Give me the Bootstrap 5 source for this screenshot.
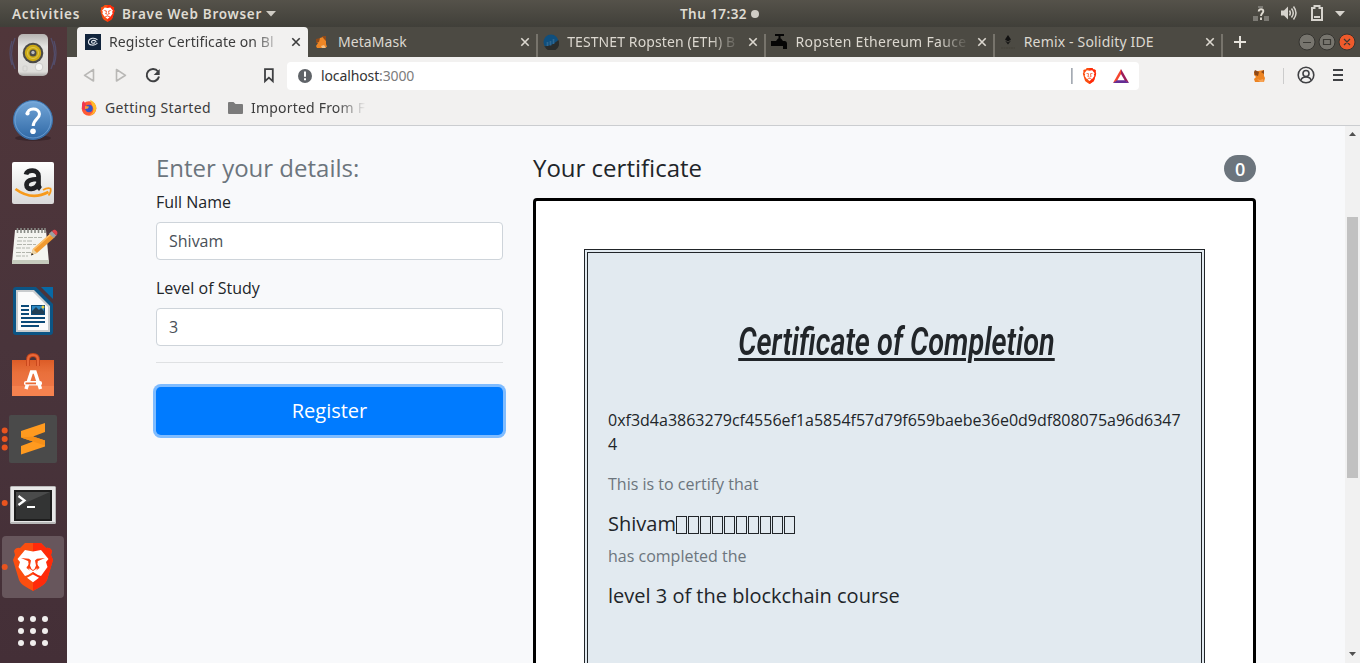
<!DOCTYPE html>
<html lang="en">
<head>
<meta charset="utf-8">
<title>Register Certificate on Blockchain</title>
<link rel="stylesheet" href="https://cdn.jsdelivr.net/npm/bootstrap@5.3.0/dist/css/bootstrap.min.css">
<style>
  html, body { height: 663px; overflow: hidden; }
  body { font-family: "Open Sans", "Noto Sans", sans-serif; background: #f8f9fb; color: #212529; line-height: 1.5; }
  svg { display: block; flex: none; }
  .ui-font { font-family: "Noto Sans", "Open Sans", sans-serif; font-size: 14px; line-height: 20px; white-space: nowrap; }
  .system-bar { height: 27px; background: linear-gradient(#55524a, #403f39); color: #dfdbd2; font-weight: 600; font-size: 13.5px; display: grid; grid-template-columns: 1fr auto 1fr; }
  .activities { margin-left: 12px; width: 88px; letter-spacing: .8px; }
  .app-name { margin-left: 7px; letter-spacing: .72px; }
  .clock { margin-left: 79px; letter-spacing: .45px; }
  .dock { width: 67px; background: linear-gradient(#50363a, #49343b 50%, #442f37); }
  .dock svg:first-child { margin-top: -4px; }
  .tab-strip { height: 30px; background: #4c4a43; padding-left: 10px; }
  .tab-item { width: 228.4px; padding: 0 4px 0 7px; color: #dcd8d0; position: relative; }
  .tab-item + .tab-item::before { content: ""; position: absolute; left: 0; top: 7px; bottom: 0; width: 2px; background: #77746c; }
  .tab-item.current { width: 231px; padding: 0 5px 0 8px; background: #f2f1f0; color: #3c3c3c; border-radius: 4px 4px 0 0; }
  .tab-item.current + .tab-item { padding-left: 6px; }
  .tab-item.current + .tab-item::before { display: none; }
  .tab-title { flex: 1; margin-left: 8px; margin-right: 6px; letter-spacing: .1px; }
  .fade-end { -webkit-mask-image: linear-gradient(90deg, #000 calc(100% - 30px), transparent); mask-image: linear-gradient(90deg, #000 calc(100% - 30px), transparent); }
  .toolbar { height: 38px; background: #f2f1f0; }
  .address { width: 852px; height: 28px; background: #fff; border-radius: 4px; color: #333; letter-spacing: -.12px; }
  .port { color: #7c7c7c; }
  .bookmarks { height: 31px; background: #f2f1f0; border-bottom: 1px solid #cbcdd0; color: #3c3c3c; padding: 0 0 5px 14px; letter-spacing: .35px; }
  .page { height: 537px; overflow: hidden; }
  .page-body { padding: 27.2px 0 0 89px; gap: 30px; }
  .form-side { width: 347px; }
  .cert-side { width: 723px; }
  h4 { font-size: 24px; font-weight: 400; line-height: 28.8px; padding-top: 1px; height: 28.8px; }
  .text-soft { color: #6c757d; }
  .form-control { height: 38px; border-color: #ced4da; border-radius: 4px; color: #495057; }
  .rule { height: 1px; background: #dfe1e3; margin-bottom: 24px; }
  .register { height: 48px; background: #007bff; color: #fff; font-size: 20px; border: 0; border-radius: 4.8px; box-shadow: 0 0 0 3px #7fbcff; }
  .count { font-size: 18px; line-height: 18px; font-weight: 600; padding: 4.5px 10.8px; background: #6c757d; border-radius: 160px; margin-top: 1px; }
  .frame { border: 3px solid #000; border-radius: 4px; background: #fff; padding: 48px; height: 600px; }
  .sheet { border: 4px double #212529; background: #e2eaf0; height: 600px; padding: 20px; }
  .cert-title { height: 135px; padding: 41px 0 0 3px; text-align: center; }
  .cert-title span { display: inline-block; font: italic 600 39.500px/56px Roboto, sans-serif; transform: scaleX(.731); text-decoration: underline; text-decoration-thickness: 3px; text-underline-offset: 3px; white-space: nowrap; margin: 0 -60px; }
  .hash { word-break: break-all; }
  h5 { font-size: 20px; line-height: 24px; font-weight: 400; }
  .tofu { width: 11px; height: 18px; border: 1px solid #212529; margin-right: 1px; position: relative; top: 1px; }
  .scroll { width: 15px; background: #f1f1f1; }
  .thumb { width: 11px; height: 261px; background: #c1c1c1; margin-top: 76px; margin-bottom: 168px; }
</style>
</head>
<body class="d-flex flex-column">
<svg width="0" height="0" class="position-absolute">
  <symbol id="lion" viewBox="0 0 40 48">
    <path d="M12 0h16l5 5q4-1 6 3l-1 4 2 5-6 20c-2 5-9 8-14 11C15 45 8 42 6 37L0 17l2-5-1-4q2-4 6-3z" fill="#fb4e10"/>
    <path d="M20 0h8l5 5q4-1 6 3l-1 4 2 5-6 20c-2 5-9 8-14 11z" fill="#ff2a0a"/>
    <path d="M12 7l8 1.500L28 7l7.500 9-2.500 3 1.500 5-6.500 9-3-1-5-3-5 3-3 1-6.500-9L7 19l-2.500-3zM20 31.500l6 3.300-6 4.500-6-4.500z" fill="#fff"/>
    <path d="M8 15l8 .8 2 1.700-1 5 1.500 3.500L20 27l1.500-1 1.500-3.500-1-5 2-1.700 8-.8-7 3-.5 1 2 6-6.500 4.700-6.500-4.700 2-6-.5-1z" fill="#fb3e0f"/>
    <path d="M9.500 18.500q4 3.500 6.500 1.500l-1.500 3.500zM30.500 18.500q-4 3.500-6.500 1.500l1.500 3.500zM15.500 25l4.500 3 4.500-3-2 4h-5z" fill="#fff"/>
  </symbol>
  <symbol id="close" viewBox="0 0 10 10"><path d="M1.300 1.300l7.400 7.400M8.700 1.300L1.300 8.700" stroke="currentColor" stroke-width="1.600"/></symbol>
</svg>

<header class="system-bar ui-font align-items-center">
  <div class="d-flex align-items-center">
    <span class="activities">Activities</span>
    <svg width="15" height="17"><use href="#lion"/></svg>
    <span class="app-name">Brave Web Browser</span>
    <svg width="10" height="6" class="ms-1"><path d="M0 0h10L5 5.500z" fill="#cfccc5"/></svg>
  </div>
  <div class="clock d-flex align-items-center"><span>Thu 17:32</span><svg width="8" height="8" class="ms-1"><circle cx="4" cy="4" r="4" fill="#cfccc5"/></svg></div>
  <svg class="ms-auto" width="110" height="27" viewBox="1250 0 110 27">
    <path d="M1253 16h5v5h-5zM1264 16h5v5h-5zM1258 6h5v2h-5z" fill="#7c7a74"/>
    <path d="M1258.700 11.500c.3-3 4.800-3 4.600-.2 0 2-2.300 2-2.300 4.700M1261 17.500v2.500" fill="none" stroke="#dfdbd2" stroke-width="1.900"/>
    <path d="M1281 10.500h3l4-4v13l-4-4h-3z" fill="#d6d3cd"/>
    <path d="M1289.500 10.500q1.700 2.500 0 5M1291.500 8.500q3.500 4.500 0 9M1293.500 6.500q5 6.500 0 13" fill="none" stroke="#d6d3cd" stroke-width="1.500"/>
    <path d="M1314.500 6h5v2h2.500v12h-10V8h2.500z" fill="none" stroke="#d6d3cd" stroke-width="2"/><path d="M1314 16h6v2h-6z" fill="#d6d3cd"/>
    <path d="M1335 11h10l-5 5.500z" fill="#d6d3cd"/>
  </svg>
</header>

<div class="d-flex flex-grow-1">
  <aside class="dock flex-shrink-0">
    <svg width="67" height="64" viewBox="0 23 67 64">
      <defs><linearGradient id="spk" x2="0" y2="1"><stop stop-color="#b5b3b1"/><stop offset=".3" stop-color="#e4e3e1"/><stop offset=".9" stop-color="#deddda"/><stop offset="1" stop-color="#aaa8a6"/></linearGradient></defs>
      <path d="M15 38q-7 16 0 31M12 41q-4 12 0 24M51 38q7 16 0 31M54 41q4 12 0 24" fill="none" stroke="#525276" stroke-width="1.300" opacity=".8"/>
      <rect x="18" y="34" width="30" height="42" rx="5" fill="url(#spk)"/>
      <circle cx="33" cy="53" r="10.300" fill="#4b4a49"/><circle cx="33" cy="53" r="8.200" fill="#cdaa15"/><circle cx="33" cy="53" r="5.500" fill="none" stroke="#e0c84d"/><circle cx="33" cy="53" r="3.500" fill="#4a4a48"/><circle cx="33" cy="52.500" r="1.700" fill="#bbb"/>
      <circle cx="39" cy="67" r="3.800" fill="#f5f5f4" stroke="#c5c4c2" stroke-width=".8"/><rect x="23" y="66" width="4" height="5" rx="1" fill="none" stroke="#cfcecc"/>
    </svg>
    <svg width="67" height="64" viewBox="0 87 67 64">
      <defs><linearGradient id="hlp" x2="0" y2="1"><stop stop-color="#73a6d8"/><stop offset="1" stop-color="#2f68a5"/></linearGradient></defs>
      <ellipse cx="33" cy="138" rx="18" ry="3" fill="#3b272c"/><circle cx="33" cy="120" r="19.500" fill="url(#hlp)" stroke="#3a72ac"/><circle cx="33" cy="120" r="18" fill="none" stroke="#7cacdc" stroke-width=".7"/>
      <path d="M27.500 114.500c-1-7 12-7.500 12-.5 0 5-6 5-6.300 12" fill="none" stroke="#fff" stroke-width="3"/><circle cx="27.500" cy="113.500" r="2.100" fill="#fff"/><circle cx="33" cy="131.300" r="2.800" fill="#fff"/>
    </svg>
    <svg width="67" height="64" viewBox="0 151 67 64">
      <defs><linearGradient id="amz" x2="0" y2="1"><stop stop-color="#fff"/><stop offset="1" stop-color="#d9d9d9"/></linearGradient></defs>
      <rect x="12" y="162" width="42" height="42" rx="2" fill="url(#amz)"/>
      <path d="M26 174.500c1-5.500 12.500-5.500 12.500 1.500v8.500q0 3 2 4.500M38 179c-7 0-11.500 1.500-11.500 6 0 5.500 9 5 11.500-1" fill="none" stroke="#202124" stroke-width="4.700"/>
      <path d="M15.500 189q16 12 33 3" fill="none" stroke="#f79a1b" stroke-width="2.800"/><path d="M43 190q4-2.500 7.500-1.500 1 3-2 7" fill="none" stroke="#f79a1b" stroke-width="1.800"/>
    </svg>
    <svg width="67" height="64" viewBox="0 215 67 64">
      <path d="M15 230h31l3 33H12z" fill="#f4f4f0"/><path d="M12 260h37v4H12z" fill="#c5cbbd"/>
      <path d="M17.500 228v5M21 228v5M24.500 228v5M28 228v5M31.500 228v5M35 228v5M38.500 228v5M42 228v5M45 228v5" stroke="#888a85" stroke-width="1.600"/>
      <path d="M18 237.500h24M17 241h16M17 244.500h20M16 248h14M16 252.500h18M16 256h12" stroke="#b2b5ad" stroke-width="1.200" stroke-dasharray="5 1 3 1"/>
      <path d="M31 255l2-6 18-16 4 4-18 16z" fill="#f19a31"/><path d="M33 250l18-16" stroke="#fdc06a" stroke-width="1.500"/><path d="M31 255l2-6 4 4z" fill="#ecd4a6"/><path d="M31 255.500l.8-2.600 1.800 1.700z" fill="#222"/>
      <path d="M49 233.500l3-2.500 4.500 4.500-3 2.500z" fill="#9ca0a2"/><path d="M52 231l1.500-1c2-1 5 2 3.500 4.500l-1 1z" fill="#e3434b"/>
    </svg>
    <svg width="67" height="64" viewBox="0 279 67 64">
      <path d="M16 287h20l17 17v28q0 3-3 3H16q-3 0-3-3v-42q0-3 3-3z" fill="#0c5585"/><path d="M41 287h12v12z" fill="#0769a5"/>
      <path d="M16 290h18l16 16v26H16z" fill="#c9ccce"/><path d="M18 292h15l15 15v23H18z" fill="#fbfbfb"/>
      <path d="M21 306h8M21 310h8M21 314h8M21 318h24M21 322h24M21 326h18" stroke="#0b4a78" stroke-width="2"/>
      <path d="M31 305h14v10H31z" fill="#0b4a78"/><path d="M32 306h12v8H32z" fill="#2d8ac4"/><path d="M32 314v-3l4-4 3 3 2-2 3 3v3z" fill="#213f55"/><circle cx="43" cy="307" r="1.500" fill="#ecd13d"/>
    </svg>
    <svg width="67" height="64" viewBox="0 343 67 64">
      <defs><linearGradient id="bag" x2="0" y2="1"><stop stop-color="#dc5c27"/><stop offset=".35" stop-color="#e9703b"/><stop offset="1" stop-color="#f0784b"/></linearGradient></defs>
      <path d="M12 360h42v36H12z" fill="url(#bag)"/><path d="M12 386h42v10H12z" fill="#f5824f"/>
      <path d="M28 366v-6q0-5 5-5t5 5v6" fill="none" stroke="#c8461b" stroke-width="3.800"/><path d="M28 366v-6q0-5 5-5t5 5v6" fill="none" stroke="#e9693a" stroke-width="2"/>
      <path d="M26 389l5.500-17h3.500l5.500 17" fill="none" stroke="#fff" stroke-width="3.500"/><rect x="24" y="381" width="18" height="4.500" rx="2" fill="#fff"/><rect x="25.500" y="382.500" width="10.500" height="1.800" fill="#ea6b35"/>
    </svg>
    <svg width="67" height="64" viewBox="0 407 67 64">
      <g fill="#e9541f"><circle cx="4.700" cy="430.500" r="3"/><circle cx="4.700" cy="439" r="3"/><circle cx="4.700" cy="447.500" r="3"/></g>
      <rect x="9" y="415" width="48" height="48" rx="2" fill="#4a4a4a"/>
      <path d="M21 431l24-8v9l-12 4.500 12 4v6l-24 8v-8.500l12-4.500-12-4z" fill="#ff9a1f"/><path d="M33 436.500l12 4v5l-24-8z" fill="#f58f18"/>
    </svg>
    <svg width="67" height="64" viewBox="0 471 67 64">
      <circle cx="4.700" cy="503" r="3" fill="#e9541f"/>
      <rect x="10" y="486" width="46" height="38" rx="1.500" fill="#b9b9b9"/><rect x="11" y="487" width="44" height="35" fill="#e8e8e8"/><rect x="14" y="490" width="38" height="31" fill="#1d1d1d"/><rect x="16" y="492" width="34" height="27" fill="#333434"/><path d="M16 492h34l-34 15z" fill="#4a4b4b"/>
      <path d="M18.500 496l6 4.500-6 4.500" fill="none" stroke="#fff" stroke-width="2.200"/><path d="M27 507h8" stroke="#fff" stroke-width="2"/>
    </svg>
    <svg width="67" height="64" viewBox="0 535 67 64">
      <rect x="2" y="536" width="62" height="62" rx="4" fill="#67565c"/><circle cx="4.700" cy="567" r="3" fill="#e9541f"/>
      <use href="#lion" x="13" y="543" width="40" height="48"/>
    </svg>
    <svg width="67" height="64" viewBox="0 599 67 64">
      <g fill="#f0eeed"><circle cx="21" cy="619" r="3"/><circle cx="33" cy="619" r="3"/><circle cx="45" cy="619" r="3"/><circle cx="21" cy="631" r="3"/><circle cx="33" cy="631" r="3"/><circle cx="45" cy="631" r="3"/><circle cx="21" cy="643" r="3"/><circle cx="33" cy="643" r="3"/><circle cx="45" cy="643" r="3"/></g>
    </svg>
  </aside>

  <main class="flex-grow-1 overflow-hidden">
    <nav class="tab-strip d-flex ui-font">
      <div class="tab-item current d-flex align-items-center">
        <svg width="16" height="16"><path d="M0 0h16v16H0z" fill="#11243c"/><path d="M12.500 6C10 3 4 4 3.500 7.500c-.5 4 6 5 9 1.500M11 8.500C11.500 6 6.500 5.500 6.500 8c0 1.500 2.500 1.500 3.500.5" fill="none" stroke="#dfe5ec" stroke-width="1.100"/></svg>
        <span class="tab-title fade-end">Register Certificate on Bl</span>
        <svg width="14" height="10"><use href="#close"/></svg>
      </div>
      <div class="tab-item d-flex align-items-center">
        <svg width="16" height="16"><path d="M6 4l3-1 2-1 1 5v3l1 3-5 1H3l-1-2 2-3-2-1z" fill="#ee8625"/><path d="M8 2l4 0v5l-2-2zM2 5l4-1-1 4-3 1z" fill="#8e4a1a"/><path d="M7 12l3-1 2 3H8z" fill="#f5c083"/></svg>
        <span class="tab-title">MetaMask</span>
        <svg width="14" height="10"><use href="#close"/></svg>
      </div>
      <div class="tab-item d-flex align-items-center">
        <svg width="16" height="16"><circle cx="8" cy="8" r="7.500" fill="#0f4f7e"/><path d="M1 12.500q9-1 14.300-6.500A7.500 7.500 0 0 1 2 13z" fill="#2a2c2b"/><path d="M4.500 8v4M7.500 7v4.500M10.500 5v5" stroke="#2f668f" stroke-width="1.700"/></svg>
        <span class="tab-title fade-end">TESTNET Ropsten (ETH) B</span>
        <svg width="14" height="10"><use href="#close"/></svg>
      </div>
      <div class="tab-item d-flex align-items-center">
        <svg width="16" height="16"><path d="M4 0h9v2H4zM7.500 2h2v3h-2zM0 7h5l2-2.500h3L12 7h1.500q2.500 0 2.500 3v5h-4v-3H0z" fill="#050505"/></svg>
        <span class="tab-title fade-end" style="letter-spacing:.3px">Ropsten Ethereum Fauce</span>
        <svg width="14" height="10"><use href="#close"/></svg>
      </div>
      <div class="tab-item d-flex align-items-center">
        <svg width="16" height="16"><path d="M8 1l3 4.500L8 7.500l-3-2zM5 6.500l3 2 3-2-3 4z" fill="#111"/><path d="M1 14h14" stroke="#434139" stroke-dasharray="2 .5"/></svg>
        <span class="tab-title" style="letter-spacing:.17px">Remix - Solidity IDE</span>
        <svg width="14" height="10"><use href="#close"/></svg>
      </div>
      <svg width="139" height="30" viewBox="1221 27 139 30">
        <path d="M1221 34h2v23h-2z" fill="#77746c"/><path d="M1240 36v12M1234 42h12" stroke="#e6e3dc" stroke-width="2"/>
        <g fill="#77756e" stroke="#353430"><circle cx="1307" cy="42" r="8"/><circle cx="1327" cy="42" r="8"/><circle cx="1347" cy="42" r="8" fill="#ee5a2b"/></g>
        <path d="M1303 42.500h8M1323.500 39.500h7v5h-7zM1344 39l6 6M1350 39l-6 6" fill="none" stroke="#3a3934" stroke-width="1.200"/>
      </svg>
    </nav>

    <div class="toolbar ui-font d-flex align-items-center">
      <svg width="220" height="38" viewBox="67 57 220 38">
        <path d="M93.500 69.500v11.500l-9-5.700zM116.500 69.500v11.500l9-5.700z" fill="none" stroke="#b9b8b6" stroke-width="1.600" stroke-linejoin="round"/>
        <path d="M158 71.500a6.200 6.200 0 1 0 1 5" fill="none" stroke="#3f4042" stroke-width="2"/><path d="M159.700 69v6h-6z" fill="#3f4042"/>
        <path d="M265 69.200h7.800v12l-3.900-3.500-3.900 3.500z" fill="none" stroke="#3f4042" stroke-width="1.800"/>
      </svg>
      <div class="address d-flex align-items-center">
        <svg width="34" height="28" viewBox="287 62 34 28"><circle cx="305" cy="76" r="7" fill="#5f6368"/><path d="M305 71.500v5.300M305 78.300v2" stroke="#fff" stroke-width="2"/></svg>
        <span class="flex-grow-1">localhost<span class="port">:3000</span></span>
        <svg width="69" height="28" viewBox="1070 62 69 28">
          <path d="M1071 68h1.700v16h-1.700z" fill="#a5abb3"/><use href="#lion" x="1081" y="68" width="17" height="16"/>
          <path d="M1121 69l-8 14 4-2 4-7z" fill="#f5452e"/><path d="M1121 69l8 14-4-2-4-7z" fill="#9c1b5a"/><path d="M1113 83h16l-4-2.700h-8z" fill="#642d94"/>
        </svg>
      </div>
      <svg width="221" height="38" viewBox="1139 57 221 38">
        <path d="M1254 72l4-1 6-1v6l1 2-1 4h-9l-1-3 2-2-2-2z" fill="#ed8422"/><path d="M1255 70l4 2-1 4-3-1-1-3zM1264 70v4l-3-2z" fill="#8e4a1a"/><path d="M1257 79l3 1 3-1 1 3h-4z" fill="#f6a254"/>
        <path d="M1283 68h1v16h-1z" fill="#ccc"/>
        <g fill="none" stroke="#404144" stroke-width="1.600"><circle cx="1306" cy="75" r="7.800"/><circle cx="1306" cy="73.500" r="3"/><path d="M1301 80.500q.5-3.500 5-3.500t5 3.500"/></g>
        <path d="M1333 70h10M1333 75h10M1333 80h10" stroke="#404144" stroke-width="2"/>
      </svg>
    </div>

    <div class="bookmarks ui-font d-flex align-items-center">
      <svg width="16" height="16"><circle cx="8" cy="8.500" r="7.300" fill="#ff5a35"/><path d="M9 0c5 2 7 6 6 10-1 3-4 5.500-7 5.500 4-2 5-5 4-8z" fill="#ffbc28"/><path d="M1 4q0-2 1.500-3l2 2.500 1 6q-3 2-4.500-1z" fill="#f0384f"/><circle cx="8" cy="8.500" r="3.700" fill="#3755c5"/><path d="M4 6l4 .5-1 2-3 .5z" fill="#ff9c30"/></svg>
      <span style="margin-left:8px;width:123px">Getting Started</span>
      <svg width="15" height="14"><path d="M0 2q0-1 1-1h4.500l2 2H14q1 0 1 1v8q0 1-1 1H1q-1 0-1-1z" fill="#7b7b7b"/></svg>
      <span class="fade-end" style="margin-left:8px;width:115px;letter-spacing:.2px">Imported From F</span>
    </div>

    <div class="page d-flex justify-content-between">
      <div class="page-body d-flex">
        <section class="form-side">
          <h4 class="text-soft mb-2">Enter your details:</h4>
          <label class="d-block mb-2" for="name">Full Name</label>
          <input id="name" class="form-control mb-3" value="Shivam">
          <label class="d-block mb-2" for="level">Level of Study</label>
          <input id="level" class="form-control mb-3" value="3">
          <div class="rule"></div>
          <button class="btn register w-100 p-0">Register</button>
        </section>
        <section class="cert-side">
          <h4 class="d-flex justify-content-between align-items-center mb-3"><span>Your certificate</span><span class="badge count">0</span></h4>
          <div class="frame">
            <div class="sheet">
              <div class="cert-title"><span>Certificate of Completion</span></div>
              <p class="hash mb-3">0xf3d4a3863279cf4556ef1a5854f57d79f659baebe36e0d9df808075a96d63474</p>
              <p class="text-soft mb-3">This is to certify that</p>
              <h5 class="d-flex align-items-center mb-2"><span>Shivam</span><i class="tofu"></i><i class="tofu"></i><i class="tofu"></i><i class="tofu"></i><i class="tofu"></i><i class="tofu"></i><i class="tofu"></i><i class="tofu"></i><i class="tofu"></i><i class="tofu"></i></h5>
              <p class="text-soft mb-3">has completed the</p>
              <h5>level 3 of the blockchain course</h5>
            </div>
          </div>
        </section>
      </div>
      <div class="scroll d-flex flex-column align-items-center">
        <svg width="15" height="15"><path d="M4 10h7L7.500 6z" fill="#505050"/></svg>
        <div class="thumb"></div>
        <svg width="15" height="15"><path d="M4 6h7l-3.500 4z" fill="#505050"/></svg>
      </div>
    </div>
  </main>
</div>
<script src="https://cdn.jsdelivr.net/npm/bootstrap@5.3.0/dist/js/bootstrap.bundle.min.js"></script>
</body>
</html>
